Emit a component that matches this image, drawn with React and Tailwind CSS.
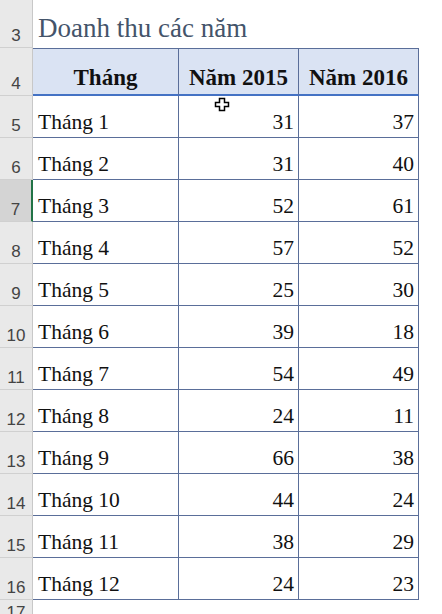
import React from 'react';

const rows = [
  ['Tháng 1', 31, 37],
  ['Tháng 2', 31, 40],
  ['Tháng 3', 52, 61],
  ['Tháng 4', 57, 52],
  ['Tháng 5', 25, 30],
  ['Tháng 6', 39, 18],
  ['Tháng 7', 54, 49],
  ['Tháng 8', 24, 11],
  ['Tháng 9', 66, 38],
  ['Tháng 10', 44, 24],
  ['Tháng 11', 38, 29],
  ['Tháng 12', 24, 23],
];

const RowHead = ({ n, active }) => (
  <div
    className={`w-[33px] shrink-0 flex items-end justify-center pb-[3px] border-b border-[#d0d0d0] text-[17px] leading-none text-[#444] font-['Liberation_Sans',sans-serif] ${
      active ? 'bg-[#d4d4d4] border-r-2 border-r-[#217346]' : 'bg-[#e9e9e9] border-r border-r-[#c8c8c8]'
    }`}
  >
    {n}
  </div>
);

const App = () => {
  return (
    <div className="relative w-[442px] h-[614px] overflow-hidden bg-white font-['Liberation_Serif',serif] text-[#111]">
      {/* Row 3 - title */}
      <div className="flex h-[48px]">
        <RowHead n={3} />
        <div className="flex-1 flex items-end pl-[5px] pb-[6px] text-[27px] leading-none text-[#44546a] whitespace-nowrap">
          Doanh thu các năm
        </div>
      </div>

      {/* Row 4 - header */}
      <div className="flex h-[48px]">
        <RowHead n={4} />
        <div className="w-[146px] flex items-end justify-center pb-[5px] bg-[#dae3f3] border-t border-r border-[#5a6e99] border-b-2 border-b-[#4472c4] text-[23px] font-bold leading-none">
          Tháng
        </div>
        <div className="w-[120px] flex items-end justify-center pb-[5px] bg-[#dae3f3] border-t border-r border-[#5a6e99] border-b-2 border-b-[#4472c4] text-[23px] font-bold leading-none whitespace-nowrap">
          Năm 2015
        </div>
        <div className="w-[120px] flex items-end justify-center pb-[5px] bg-[#dae3f3] border-t border-r border-[#5a6e99] border-b-2 border-b-[#4472c4] text-[23px] font-bold leading-none whitespace-nowrap">
          Năm 2016
        </div>
      </div>

      {/* Data rows */}
      {rows.map(([label, a, b], i) => (
        <div key={label} className="flex h-[42px]">
          <RowHead n={i + 5} active={i + 5 === 7} />
          <div className="w-[146px] flex items-end pl-[5px] pb-[4px] border-r border-b border-[#5a6e99] text-[21.5px] leading-none whitespace-nowrap">
            {label}
          </div>
          <div className="w-[120px] flex items-end justify-end pr-[4px] pb-[4px] border-r border-b border-[#5a6e99] text-[21.5px] leading-none">
            {a}
          </div>
          <div className="w-[120px] flex items-end justify-end pr-[4px] pb-[4px] border-r border-b border-[#5a6e99] text-[21.5px] leading-none">
            {b}
          </div>
        </div>
      ))}

      {/* Row 17 */}
      <div className="flex h-[42px]">
        <div className="w-[33px] shrink-0 flex items-start justify-center pt-[4px] bg-[#e9e9e9] border-r border-[#c8c8c8] text-[17px] leading-none text-[#444] font-['Liberation_Sans',sans-serif]">
          17
        </div>
      </div>

      {/* Excel cell cursor */}
      <svg className="absolute left-[214px] top-[97px]" width="16" height="15" viewBox="0 0 16 15">
        <path
          d="M5.5 1.5h5v4h4v4h-4v4h-5v-4h-4v-4h4z"
          fill="#fff"
          stroke="#000"
          strokeWidth="1.5"
          strokeLinejoin="miter"
        />
      </svg>
    </div>
  );
};

export default App;
